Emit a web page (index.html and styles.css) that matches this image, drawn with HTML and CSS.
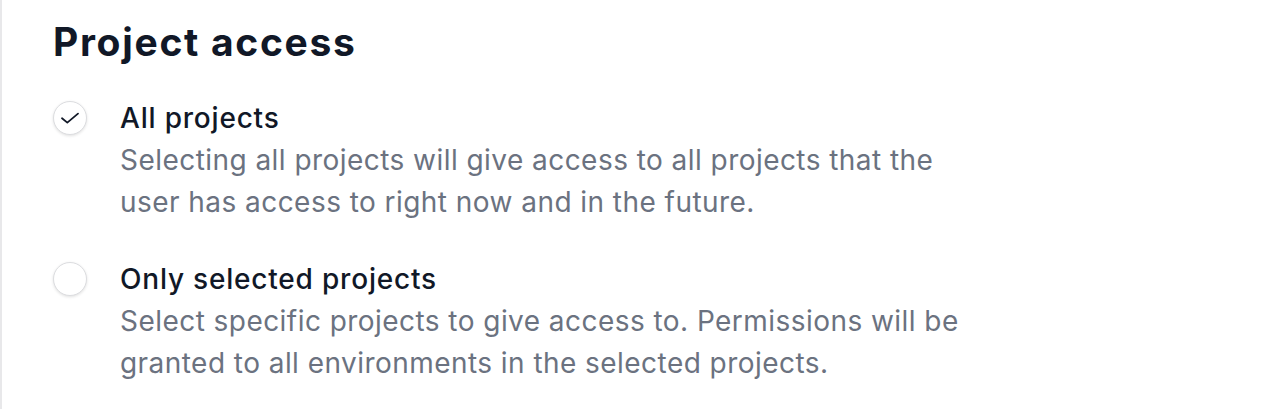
FILE: index.html
```html
<!DOCTYPE html>
<html lang="en">
<head>
    <meta charset="UTF-8">
    <meta name="viewport" content="width=device-width, initial-scale=1.0">
    <title>Project access</title>
    <link rel="stylesheet" href="styles.css">
</head>
<body>
    <div class="panel">
        <h2 class="panel-title">Project access</h2>

        <div class="options">
            <!-- All projects -->
            <label class="option">
                <span class="radio checked">
                    <svg width="20" height="20" viewBox="0 0 20 20" fill="none">
                        <path d="M2 10.2 L7.3 14.6 L18 5.6" stroke="#111827" stroke-width="1.8" stroke-linecap="round" stroke-linejoin="round"/>
                    </svg>
                </span>
                <span class="option-text">
                    <span class="option-name">All projects</span>
                    <span class="option-desc">Selecting all projects will give access to all projects that the user has access to right now and in the future.</span>
                </span>
            </label>

            <!-- Only selected projects -->
            <label class="option">
                <span class="radio"></span>
                <span class="option-text">
                    <span class="option-name">Only selected projects</span>
                    <span class="option-desc">Select specific projects to give access to. Permissions will be granted to all environments in the selected projects.</span>
                </span>
            </label>
        </div>
    </div>
</body>
</html>
```

FILE: styles.css
```css
body {
    margin: 0;
    padding: 0;
    background: #ffffff;
    font-family: Inter, "Noto Sans", sans-serif;
}

.panel {
    border-left: 2px solid #e8e8ea;
    min-height: 409px;
    box-sizing: border-box;
    padding: 18px 0 0 51px;
}

.panel-title {
    margin: 0;
    font-size: 39px;
    font-weight: 700;
    line-height: 48px;
    color: #111827;
    letter-spacing: 1.7px;
}

.options {
    display: flex;
    flex-direction: column;
    gap: 36px;
    margin-top: 32px;
}

.option {
    display: flex;
    align-items: flex-start;
    gap: 33px;
}

.radio {
    flex: none;
    width: 32px;
    height: 32px;
    margin-top: 3px;
    border-radius: 50%;
    border: 1.5px solid #dcdde0;
    box-shadow: 0 1px 3px rgba(0, 0, 0, 0.12);
    display: flex;
    align-items: center;
    justify-content: center;
    background: #fff;
}

.option-text {
    display: flex;
    flex-direction: column;
    max-width: 860px;
}

.option-name {
    font-size: 28px;
    font-weight: 500;
    line-height: 41px;
    color: #111827;
    letter-spacing: 0.8px;
}

.option-desc {
    font-size: 28px;
    line-height: 42px;
    color: #6b7280;
    letter-spacing: 0.45px;
}
```
